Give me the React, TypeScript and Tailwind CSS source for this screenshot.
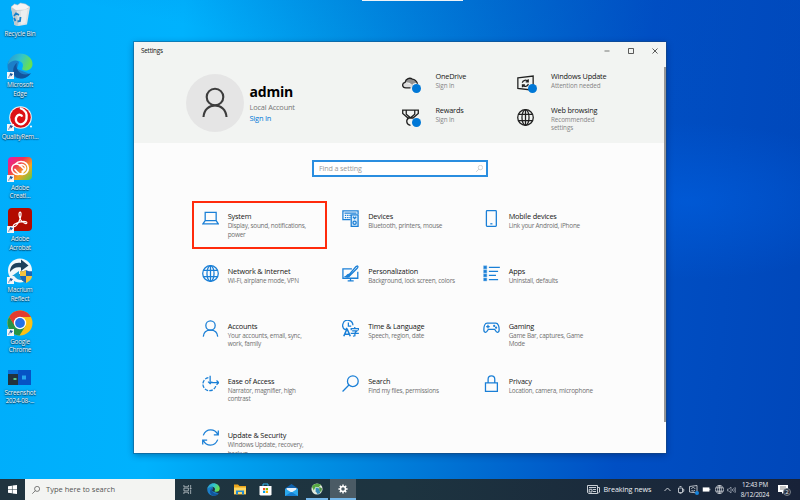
import type { ReactNode } from "react";

const blue = "#1a7fd6";

function Svg({ children, className = "size-[18px]", color = blue, box = "0 0 24 24", w = 1.8 }: { children: ReactNode; className?: string; color?: string; box?: string; w?: number }) {
  return (
    <svg viewBox={box} className={`block shrink-0 ${className}`} fill="none" stroke={color} strokeWidth={w}>
      {children}
    </svg>
  );
}

const globe = (
  <>
    <circle cx="12" cy="12" r="11" />
    <ellipse cx="12" cy="12" rx="5" ry="11" />
    <path d="M12 1v22M2.500 7.500h19M2.500 16.500h19" />
  </>
);

const icons: Record<string, ReactNode> = {
  System: <path d="M4.500 3.500h15.500V15H4.500zM4.500 15 1.300 19.500h21.600L20 15" />,
  Devices: (
    <>
      <path d="M12 13.500H1.300V1.300h21.400v4.200M3.500 4.500h17" />
      <path d="M4 7.600h9M4 10.700h8" strokeDasharray="2 1.200" />
      <path d="M13 7h9.700v16H13z" fill="#d9ebfa" />
      <circle cx="17.800" cy="18" r="2.300" />
      <path d="m15.500 9.500 2.300 2.500 2.300-2.500" />
    </>
  ),
  "Mobile devices": (
    <>
      <rect x="4.800" y="1" width="14" height="22" rx="1" />
      <path d="M10.300 19.500h3" />
    </>
  ),
  "Network & Internet": globe,
  Personalization: (
    <>
      <path d="M14 5.500H1.300v13.200h21V9.500M8 22.300h8.500M12 19v3" />
      <path d="m10 13.500 9.500-11q2-1.800 2.800-.7t-.8 2.700l-10 10" />
      <path d="M11.500 14.500c-1.500 3-4 3-6.500 2 2-.7 2.800-3.800 5-3z" fill={blue} />
    </>
  ),
  Apps: (
    <>
      <path d="M8.300 3.300h15.500M8.300 9h13M8.300 14.800h10M8.300 20.500h13" />
      <path d="M.7 1.100h4.800v4.400H.7zM.7 6.800h4.800v4.400H.7zM.7 12.500h4.800v4.400H.7zM.7 18.200h4.800v4.400H.7z" fill={blue} stroke="#8dc0ec" strokeWidth=".7" />
    </>
  ),
  Accounts: (
    <>
      <circle cx="12" cy="7.800" r="6.600" />
      <path d="M1.800 23.500c.5-6 4.500-9.100 10.200-9.100s9.700 3.100 10.200 9.100" />
    </>
  ),
  "Time & Language": (
    <>
      <path d="M5 14A7.200 7.200 0 1 1 15.400 7.500M9 3.500v5h4M5 14l2-3" />
      <path d="M2.500 23 6.800 13h.6L11.700 23M4.300 20h6" strokeWidth="2.200" />
      <path d="M18 10v2M13 14.500v-2.300h10.300v2.300M14.300 15.500h6.700L18.200 18M12.300 19h11.500M18.200 18v4.300l-2.700.4" />
    </>
  ),
  Gaming: (
    <>
      <path d="M6 4.500C2.500 4.500 1.200 9 1.200 13.500c0 5 3.500 5 5.500 1l.8-1.200h9l.8 1.200c2 4 5.500 4 5.500-1C22.800 9 21.500 4.500 18 4.500z" />
      <path d="M4.500 9.300h5M7 6.800v5" />
      <circle cx="15.800" cy="8.300" r=".7" />
      <circle cx="18.500" cy="10.800" r=".7" />
    </>
  ),
  "Ease of Access": (
    <>
      <path d="M9 3.700A9.300 9.300 0 1 0 19.500 15.500" strokeDasharray="5 1.700" />
      <path d="M11.500 1v11M8.500 9.300l3 3 3-3M14 10.800h9.500M20.500 7.800l3 3-3 3" />
    </>
  ),
  Search: (
    <>
      <circle cx="15.300" cy="8.700" r="7.600" />
      <path d="M9.800 14.200.8 23.200" />
    </>
  ),
  Privacy: <path d="M3.500 11h16.800v12H3.500zM7.200 11V6a4.700 4.700 0 0 1 9.400 0v5" />,
  "Update & Security": (
    <path d="M1.800 9C3.800 4 7.500 1.300 12.200 1.300c4.500 0 8 2.200 10.200 6.500M23 2v6.300h-6.300M22.200 15c-2 5-5.700 7.700-10.200 7.700-4.500 0-8-2.200-10.200-6.500M1 22v-6.300h6.300" />
  ),
};

const settings: [string, string[]][] = [
  ["System", ["Display, sound, notifications,", "power"]],
  ["Devices", ["Bluetooth, printers, mouse"]],
  ["Mobile devices", ["Link your Android, iPhone"]],
  ["Network & Internet", ["Wi-Fi, airplane mode, VPN"]],
  ["Personalization", ["Background, lock screen, colors"]],
  ["Apps", ["Uninstall, defaults"]],
  ["Accounts", ["Your accounts, email, sync,", "work, family"]],
  ["Time & Language", ["Speech, region, date"]],
  ["Gaming", ["Game Bar, captures, Game", "Mode"]],
  ["Ease of Access", ["Narrator, magnifier, high", "contrast"]],
  ["Search", ["Find my files, permissions"]],
  ["Privacy", ["Location, camera, microphone"]],
  ["Update & Security", ["Windows Update, recovery,", "backup"]],
];

function Tile({ name, lines }: { name: string; lines: string[] }) {
  return (
    <div className="flex h-[54.800px] items-start">
      <Svg className="size-[17px]">{icons[name]}</Svg>
      <div className="ml-[9px] whitespace-nowrap">
        <div className="text-[7.300px] leading-[12px] tracking-[-0.160px] text-[#141414]">{name}</div>
        <div className="text-[6.400px] leading-[8.400px] tracking-[-0.230px] text-[#707070]">
          {lines.map((l) => (
            <div key={l}>{l}</div>
          ))}
        </div>
      </div>
    </div>
  );
}

const headerIcons: Record<string, ReactNode> = {
  OneDrive: (
    <>
      <path d="M5 18C0 17.500 0 11.500 4.300 10.500L14 14l8 4z" fill="#dcdcdc" stroke="none" />
      <path d="M4.300 10.500C5.500 5 11 3.200 14.500 5.800c3.500.3 5.500 2.500 6.500 6-3-1-5 .2-6.500 2.200-3.500-3-6.500-4-10.200-3.500z" fill="#929292" stroke="none" />
      <path d="M12 18.200H5.500C-.3 18-.5 11.500 4.300 10.500 5.500 5 11 3.200 14.500 5.800c3.500.3 6 2.500 7.500 6.500" />
    </>
  ),
  Rewards: <path d="M1 1.500h22v4.700l-7.500 6.500h-7L1 6.200zM6 2v5.500l6 5 6-5V2M9.500 12.500c-4.500 3-3.500 10 2.500 10.500" />,
  "Windows Update": (
    <path d="M1.200 4 22.800 1.500v20l-21.600-2.500zM7.500 11c.5-4 6-5 8-1.500M15.800 6v3.800h-3.500M16 12.500c-.5 4-6 5-8 1.500M7.700 17.300v-3.500h3.500" />
  ),
  "Web browsing": globe,
};

function HeaderItem({ name, lines, dot }: { name: string; lines: string[]; dot?: boolean }) {
  return (
    <div className="flex h-[34px] items-start whitespace-nowrap">
      <div className="relative mt-[4.500px]">
        <Svg color="#202020" w={1.800} className="size-[17px]">{headerIcons[name]}</Svg>
        {dot && <span className="absolute top-[9.500px] left-[10.800px] size-[9px] rounded-full bg-[#0078d7]" />}
      </div>
      <div className="ml-[17px]">
        <div className="text-[7.300px] leading-[12px] tracking-[-0.180px] text-[#141414]">{name}</div>
        {lines.map((l) => (
          <div key={l} className="text-[6.300px] leading-[8.300px] tracking-[-0.100px] text-[#858585]">{l}</div>
        ))}
      </div>
    </div>
  );
}

function Edge({ className }: { className: string }) {
  return (
    <svg viewBox="0 0 26 26" className={className}>
      <defs>
        <linearGradient id="edgeTop" x1="0" x2="1" y1="0" y2=".35">
          <stop stopColor="#2792d5" />
          <stop offset=".55" stopColor="#32c4cc" />
          <stop offset="1" stopColor="#67e052" />
        </linearGradient>
      </defs>
      <path d="M.5 13C.5 5 7 5 12 9L10 16l13 5c-2 3-6 4.500-9.500 4.500C6 25.500.5 20 .5 13z" fill="#1b7fc9" />
      <path d="M.7 12C1.500 5 7 .5 13 .5c7 0 12.500 5 12.500 10.500 0 4-3 6.500-7 6.500-3 0-4-1-3-3 2-4-2-7-6-7-4 0-7.500 2-8.800 4.500z" fill="url(#edgeTop)" />
      <path d="M10 10c-2 5 2 11.500 9 11.500 2 0 4-1 5-1.500-2 3.500-6 5.500-10 5.500C5 25.500 4 14 10 10z" fill="#12549c" />
    </svg>
  );
}

function Shortcut() {
  return (
    <svg viewBox="0 0 8 8" className="absolute bottom-0 left-0 size-[7px]">
      <path d="M0 0h8v8H0z" fill="#f4f6f8" />
      <path d="M2 6.800C2 4.500 3 3.500 4.500 3.400V4.800L6.500 2.500 3.500 1.500" fill="#225a9d" stroke="#225a9d" strokeWidth=".6" />
    </svg>
  );
}

const desktopArt: Record<string, ReactNode> = {
  bin: (
    <svg viewBox="0 0 26 26" className="size-[26px]">
      <path d="m4 5 3.500 18 4 1 8.500-1.500L23 5z" fill="#dde2e4" />
      <path d="m4 5 5.500 3 2 16-4-1z" fill="#c3cacd" />
      <path d="m4 5 3.500-3 3 1 3-2 5 1 4.500 3-5 3-9 .5z" fill="#f4f4f4" stroke="#b6bcc0" strokeWidth=".5" />
      <path d="m14 9 6.500-2-2 14-4.500 1.500z" fill="#ebeeef" />
      <path d="m7 14 2-2.500 3 1.500M13.500 15l-.5 4-2.500.5M8.500 19 7 16" fill="none" stroke="#1780c9" strokeWidth="1.800" />
    </svg>
  ),
  edge: <Edge className="size-[26px]" />,
  quality: (
    <svg viewBox="0 0 26 26" className="size-[26px]">
      <circle cx="13.500" cy="12.500" r="11.300" fill="#f2f2f2" />
      <circle cx="13.500" cy="12.500" r="10.300" fill="#dc1016" />
      <path d="M13 3c5.500 2 7.500 6 6.500 11-1 4.500-4.500 6-7.500 5-3.500-1.200-4-5.500-2-8 1.800-2 4.500-1.500 5.200.7" fill="none" stroke="white" strokeWidth="2.300" />
      <circle cx="13" cy="14.500" r="2" fill="#dc1016" />
      <circle cx="24" cy="21.500" r="1" fill="white" />
    </svg>
  ),
  creative: (
    <svg viewBox="0 0 26 26" className="size-[26px]">
      <defs>
        <linearGradient id="rainbow" x1="0" y1="0" x2="1" y2="1">
          <stop stopColor="#e71baa" /><stop offset=".35" stopColor="#f03355" /><stop offset=".65" stopColor="#f4a51f" /><stop offset="1" stopColor="#53c94d" />
        </linearGradient>
      </defs>
      <rect x="1" y="1" width="24" height="23" rx="4" fill="url(#rainbow)" />
      <path d="M16 16.500c-1.500 1.500-3 2-5 2C7.500 18.500 4.800 16 4.800 13S7 8 9.800 8c2 0 3 .8 4.500 2.300l3 3.200M8.500 8c1.500-1.800 3.500-2.500 5.500-2.500 4.200 0 7.300 3 7.300 6.800 0 3.500-2.600 6.200-6 6.200-2.300 0-3.500-.8-5-2.500L8 13.500M12.500 9.500c2.500-1.800 6-.5 6 2.500 0 2-1.500 3.300-3.200 3.300" fill="none" stroke="white" strokeWidth="1.700" strokeLinecap="round" />
    </svg>
  ),
  acrobat: (
    <svg viewBox="0 0 26 26" className="size-[26px]">
      <rect x="1" y="1" width="24" height="23" rx="4" fill="#b30b00" />
      <path d="M12.800 5.200c2.300-.5 1 5.800-.8 9.300-1.800 3.500-4.200 5.800-5.500 5-1.200-1.200 2.500-3.800 7-4.700 4-.8 6.800-.3 6.300 1.200-.8 1.500-4-.3-6-3-1.500-2-2.500-7.300-1-7.800z" fill="none" stroke="white" strokeWidth="1.200" />
    </svg>
  ),
  macrium: (
    <svg viewBox="0 0 26 26" className="size-[26px]">
      <circle cx="13" cy="12.500" r="12" fill="#f2f8fb" />
      <path d="M3 14C3 7 8 4 14 5V1.500l7.500 6L14 13V9.500C9 8.500 6 10.500 3 14z" fill="#1d405c" />
      <path d="m5 18 7-5v3h3v6c-4 0-5-1-8-4z" fill="#159fdb" />
      <path d="M19 12c2 1.300 4 1.300 6 1.300v4.700H13v-4.700c2 0 4 0 6-1.300z" fill="#1767b9" />
      <path d="M13 18h12c0 3.500-3 5.500-6 7-3-1.500-6-3.500-6-7z" fill="#f4c33e" />
      <path d="M13 13.300c2 0 4 0 6-1.300v6h-6z" fill="#f4c33e" />
      <path d="M13 18h6v7c-3-1.500-6-3.500-6-7z" fill="#1767b9" />
    </svg>
  ),
  chrome: (
    <svg viewBox="0 0 26 26" className="size-[26px]">
      <circle cx="13" cy="13" r="12.500" fill="#fbc116" />
      <path d="M2.200 6.800A12.500 12.500 0 0 0 12.500 25.500L18.500 16 13 18 7.800 15.500z" fill="#269447" />
      <path d="M13 7h11a12.500 12.500 0 0 0-21.800-.2L7.800 16z" fill="#e33b2e" />
      <circle cx="13" cy="13" r="6.200" fill="white" />
      <circle cx="13" cy="13" r="4.900" fill="#2371e7" />
    </svg>
  ),
  screenshot: (
    <svg viewBox="0 0 26 26" className="size-[26px]">
      <path d="M1 9h23v15H1z" fill="#0870dc" />
      <path d="M11 9h13v15H11z" fill="#0653c5" />
      <path d="M1 13h10v11H1z" fill="#23323e" />
      <path d="M6.500 17h3v2h-3z" fill="#57c48a" />
      <path d="M15 14.500h4v4h-4z" fill="#27a7ef" />
    </svg>
  ),
};

const desktopItems: [string, string[]][] = [
  ["bin", ["Recycle Bin"]],
  ["edge", ["Microsoft", "Edge"]],
  ["quality", ["QualityRem..."]],
  ["creative", ["Adobe", "Creati..."]],
  ["acrobat", ["Adobe", "Acrobat"]],
  ["macrium", ["Macrium", "Reflect"]],
  ["chrome", ["Google", "Chrome"]],
  ["screenshot", ["Screenshot", "2024-08-..."]],
];

function WindowBox() {
  return (
    <main className="absolute top-[42px] left-[134px] flex h-[411px] w-[532px] flex-col overflow-hidden bg-[#fcfcfc] shadow-[0_0_0_1px_rgba(30,70,110,0.4),0_2px_7px_rgba(0,20,60,0.4)]">
      <header className="h-[101px] shrink-0 bg-[#f2f4f2]">
        <div className="flex h-[17px] items-center pl-[7px]">
          <span className="grow text-[6.300px] tracking-[-0.200px] text-[#111]">Settings</span>
          <div className="flex items-center gap-[18px] pr-[8.500px]">
            <Svg color="#444" className="size-[6px]" box="0 0 6 6" w={0.7}><path d="M.5 3h5" /></Svg>
            <Svg color="#333" className="size-[6px]" box="0 0 6 6" w={0.8}><path d="M.5.5h5v5h-5z" /></Svg>
            <Svg color="#333" className="size-[6px]" box="0 0 6 6" w={0.8}><path d="m.5.5 5 5m0-5-5 5" /></Svg>
          </div>
        </div>
        <div className="flex">
          <div className="mt-[15px] ml-[52px] grid size-[57.500px] place-items-center rounded-full bg-[#e5e5e5]">
            <Svg color="#3c3c3c" className="h-[32px] w-[28px]" box="0 0 28 32" w={2.100}>
              <circle cx="14" cy="10" r="8.300" />
              <path d="M2.500 30C3 22.500 8 18.500 14 18.500S25 22.500 25.500 30" />
            </Svg>
          </div>
          <div className="mt-[22.500px] ml-[6px] w-[152px] whitespace-nowrap">
            <div className="text-[14px] leading-[19px] font-bold tracking-[-0.200px] text-black">admin</div>
            <div className="mt-[1.500px] text-[7.400px] leading-[11px] tracking-[-0.180px] text-[#777]">Local Account</div>
            <div className="text-[7.400px] leading-[11px] tracking-[-0.180px] text-[#0078d7]">Sign In</div>
          </div>
          <div className="mt-[11px] grid grid-cols-[115.500px_130px]">
            <HeaderItem name="OneDrive" lines={["Sign In"]} dot />
            <HeaderItem name="Windows Update" lines={["Attention needed"]} dot />
            <HeaderItem name="Rewards" lines={["Sign In"]} dot />
            <HeaderItem name="Web browsing" lines={["Recommended", "settings"]} />
          </div>
        </div>
      </header>
      <div className="mt-[17px] ml-[178px] flex h-[17px] w-[176px] shrink-0 items-center border-2 border-[#2a8ee0] bg-white pr-[3px] pl-[5px] text-[7.200px] tracking-[-0.140px] text-[#999]">
        <span className="grow">Find a setting</span>
        <Svg color="#aaa" className="size-[7px]">{icons.Search}</Svg>
      </div>
      <div className="mt-[33.300px] ml-[67.700px] grid grid-cols-[140.500px_140.500px_150px]">
        {settings.map(([n, l]) => (
          <Tile key={n} name={n} lines={l} />
        ))}
      </div>
      <span className="absolute top-[25px] right-0 h-[355px] w-[2px] bg-[#969696]" />
      <span className="absolute top-[159px] left-[58px] h-[48px] w-[135px] border-[2px] border-[#ff2b0c]" />
    </main>
  );
}

function Taskbar() {
  return (
    <footer className="flex h-[21px] shrink-0 items-stretch bg-gradient-to-r from-[#20343f] via-[#1d3440] to-[#182238] text-white">
      <div className="grid w-[25px] place-items-center">
        <svg viewBox="0 0 10 10" className="size-[9px]"><path fill="white" d="M0 1.300 4.400.7v4H0zM5 .6 10 0v4.700H5zM0 5.300h4.400v4L0 8.700zM5 5.300h5V10l-5-.6z" /></svg>
      </div>
      <div className="flex w-[150px] items-center bg-[#f3f4f2] text-[7.500px] text-[#555]">
        <Svg color="#333" className="mr-[6px] ml-[7px] size-[8px]">{icons.Search}</Svg>
        <span>Type here to search</span>
      </div>
      <div className="grid w-[25px] place-items-center">
        <Svg color="#c9d1d5" className="size-[9px]" box="0 0 10 10" w={0.800}><path d="M1 0v2h5V0M1 10V8h5v2M1 3.500h5v3H1zM8.500 0v3M8.500 5.500V10M8 3.500h1v1H8z" /></Svg>
      </div>
      <div className="grid w-[27px] place-items-center"><Edge className="size-[13px]" /></div>
      <div className="grid w-[25px] place-items-center">
        <svg viewBox="0 0 12 11" className="h-[11px] w-[12px]"><path d="M0 .5h4l1.500 1.500H12v8.500H0z" fill="#eba51c" /><path d="M0 3.500h12V10H0z" fill="#ffd862" /><path d="M2 6.500h8v4H8V8H4v2.500H2z" fill="#258bd1" /></svg>
      </div>
      <div className="grid w-[26px] place-items-center">
        <svg viewBox="0 0 13 13" className="size-[13px]"><path d="M4 3V1h5v2" fill="none" stroke="#37b7ed" /><path d="M.5 3h12v8.500l-1 1h-10l-1-1z" fill="white" /><path d="M4 5h2.200v2.200H4z" fill="#f05022" /><path d="M6.800 5H9v2.200H6.800z" fill="#7fba00" /><path d="M4 7.800h2.200V10H4z" fill="#00a4ef" /><path d="M6.800 7.800H9V10H6.800z" fill="#ffb900" /></svg>
      </div>
      <div className="grid w-[26px] place-items-center">
        <svg viewBox="0 0 13 12" className="h-[12px] w-[13px]"><path d="M0 4.500 6.500 0 13 4.500V12H0z" fill="#1163ad" /><path d="M1.500 4h10v3l-5 2-5-2z" fill="#e8f2fa" /><path d="m0 4.500 6.500 4 6.500-4V12H0z" fill="#2ba9ed" /><path d="m0 12 6.500-4 6.500 4z" fill="#167dd0" /></svg>
      </div>
      <div className="mr-[2px] ml-[2px] grid w-[22px] place-items-center border-b-2 border-[#75b8eb]">
        <svg viewBox="0 0 13 13" className="size-[12px]"><circle cx="6.500" cy="6.500" r="6" fill="#e2eadf" /><path d="M1 4c2-4 7-4 10-2L8 5 5 4 3 8z" fill="#56a842" /><path d="m5 5 4 1 1 5-3 1-2-3z" fill="#358ab6" /><path d="m9 4 3 2-1 4-2-2z" fill="#4e9345" /></svg>
      </div>
      <div className="grid w-[26px] place-items-center border-b-2 border-[#75b8eb] bg-[#4b5b65]">
        <Svg color="white" className="size-[10px]" w={3.500}>
          <circle cx="12" cy="12" r="6" />
          <path d="M12 1v5M12 18v5M1 12h5M18 12h5M4.200 4.200l3.500 3.500M16.300 16.300l3.500 3.500M4.200 19.800l3.500-3.500M16.300 7.700l3.500-3.500" />
        </Svg>
      </div>
      <div className="ml-auto flex items-center text-[#edf0f4]">
        <Svg color="#dce0e4" className="h-[9px] w-[13px]" box="0 0 13 9" w={0.900}><path d="M.5.500h10v8H2l-1.500-1zM10.500 2.500h2V7l-1.500 1.500M2 2.500h7M2.200 4.300H5V7H2.200zM6 4.500h3M6 6.500h3" /></Svg>
        <span className="ml-[4px] w-[60.500px] text-[7.200px] tracking-[-0.080px] whitespace-nowrap">Breaking news</span>
        <Svg color="#dce0e4" className="h-[5px] w-[7px]" box="0 0 7 5" w={0.900}><path d="m.5 4 3-3 3 3" /></Svg>
        <Svg color="#dce0e4" className="ml-[6px] size-[8px]" box="0 0 8 8" w={0.800}><path d="M1.500 2h4v4.500h-4zM2.500.500h2M2.500 7.700h2M5.500 3.300h1.300v2H5.500" /></Svg>
        <div className="relative ml-[4px]">
          <Svg color="#dce0e4" className="size-[9px]" box="0 0 9 9" w={0.800}><path d="M.5 1.500 8 .5v7.500L.5 7zM2.500 4c.5-2 3-2 3.500 0M6 5c-.5 1.500-3 1.500-3.500 0" /></Svg>
          <span className="absolute right-[-1px] bottom-[-1px] size-[4px] rounded-full bg-[#1683dc]" />
        </div>
        <svg viewBox="0 0 9 6" className="ml-[4px] h-[5px] w-[9px]"><path d="M0 .5h8v5H0z" fill="white" /><path d="M8 2h1v2H8z" fill="white" /></svg>
        <Svg color="#e3e6ea" className="ml-[4px] size-[9px]">{globe}</Svg>
        <Svg color="#a7afbb" className="ml-[3px] h-[8px] w-[9px]" box="0 0 9 8" w={0.700}><path d="M.5 3h1.300L4 1v6L1.800 5H.5zM5.300 3q.8 1 0 2M6.600 2q1.600 2 0 4M7.900 1q2 3 0 6" /></Svg>
        <div className="ml-[2px] w-[34px] pt-px text-center text-[6.300px] leading-[10px] tracking-[-0.150px] whitespace-nowrap">
          <div>12:43 PM</div>
          <div>8/12/2024</div>
        </div>
        <div className="relative mr-[12px] ml-[6px]">
          <svg viewBox="0 0 10 9" className="h-[9px] w-[10px]"><path d="M0 0h10v7H6L4 9V7H0z" fill="white" /><path d="M2 2h6M2 4h5" stroke="#333" strokeWidth=".6" /></svg>
          <span className="absolute top-[3px] left-[5px] grid size-[8px] place-items-center rounded-full border border-[#777f89] bg-[#27303e] text-[6px] leading-none">2</span>
        </div>
      </div>
    </footer>
  );
}

export default function App() {
  return (
    <div className="relative flex h-[500px] w-[800px] flex-col overflow-hidden bg-[#0062d4] font-['Open_Sans','Noto_Sans',sans-serif]">
      <div className="relative grow bg-[linear-gradient(95deg,#00adfb_0%,#00b2fd_22%,#0094e6_40%,#006fd2_60%,#004fc4_78%,#0047ba_100%)]">
        <div className="absolute inset-0 bg-[radial-gradient(ellipse_at_86%_42%,rgba(0,105,240,0.4)_0%,transparent_20%),linear-gradient(192deg,rgba(0,75,190,0.3)_0%,transparent_24%)]" />
        <div className="relative flex w-[40px] flex-col pt-[2px]">
          {desktopItems.map(([id, lines]) => (
            <div key={id} className="flex h-[51.300px] flex-col items-center">
              <div className="relative">
                {desktopArt[id]}
                {id !== "bin" && id !== "screenshot" && <Shortcut />}
              </div>
              <div className="mt-[2px] text-center text-[6.300px] leading-[8.400px] tracking-[-0.180px] whitespace-nowrap text-[#f2f8fc] [text-shadow:0_1px_1px_#063b5b,0_0_2px_#063b5b]">
                {lines.map((l) => (
                  <div key={l}>{l}</div>
                ))}
              </div>
            </div>
          ))}
        </div>
        <span className="absolute top-0 left-[362px] h-px w-[101px] bg-[#eef3f7]" />
      </div>
      <WindowBox />
      <Taskbar />
    </div>
  );
}
